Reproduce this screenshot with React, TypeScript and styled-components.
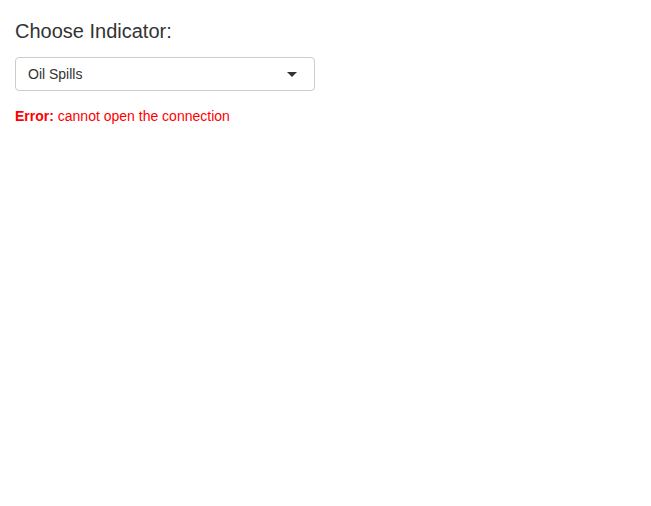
import React from "react";
import styled, { createGlobalStyle } from "styled-components";

const Global = createGlobalStyle`
  html, body { margin: 0; padding: 0; background: #fff; }
  body { font-family: "Liberation Sans", Arial, sans-serif; font-size: 14px; line-height: 1.42857; color: #333; }
`;

const Page = styled.div`
  padding: 10px 15px;
  display: flex;
  flex-direction: column;
`;

const Title = styled.h3`
  margin: 10px 0 0;
  font-size: 20px;
  font-weight: 400;
  line-height: 1.1;
  color: #333;
`;

const SelectBox = styled.div`
  margin-top: 15px;
  width: 300px;
  height: 34px;
  box-sizing: border-box;
  border: 1px solid #ccc;
  border-radius: 4px;
  display: flex;
  align-items: center;
  justify-content: space-between;
  padding: 0 17px 0 12px;
  background: #fff;
`;

const Value = styled.span`
  font-size: 14px;
  color: #333;
  padding-top: 2px;
`;

const Caret = styled.span`
  width: 0;
  height: 0;
  border-left: 5px solid transparent;
  border-right: 5px solid transparent;
  border-top: 5px solid #333;
`;

const ErrorLine = styled.div`
  margin-top: 16px;
  color: red;
  font-size: 14px;
`;

const Bold = styled.b`
  font-weight: 700;
`;

export default function App() {
  return (
    <>
      <Global />
      <Page>
        <Title>Choose Indicator:</Title>
        <SelectBox>
          <Value>Oil Spills</Value>
          <Caret />
        </SelectBox>
        <ErrorLine>
          <Bold>Error:</Bold> cannot open the connection
        </ErrorLine>
      </Page>
    </>
  );
}
